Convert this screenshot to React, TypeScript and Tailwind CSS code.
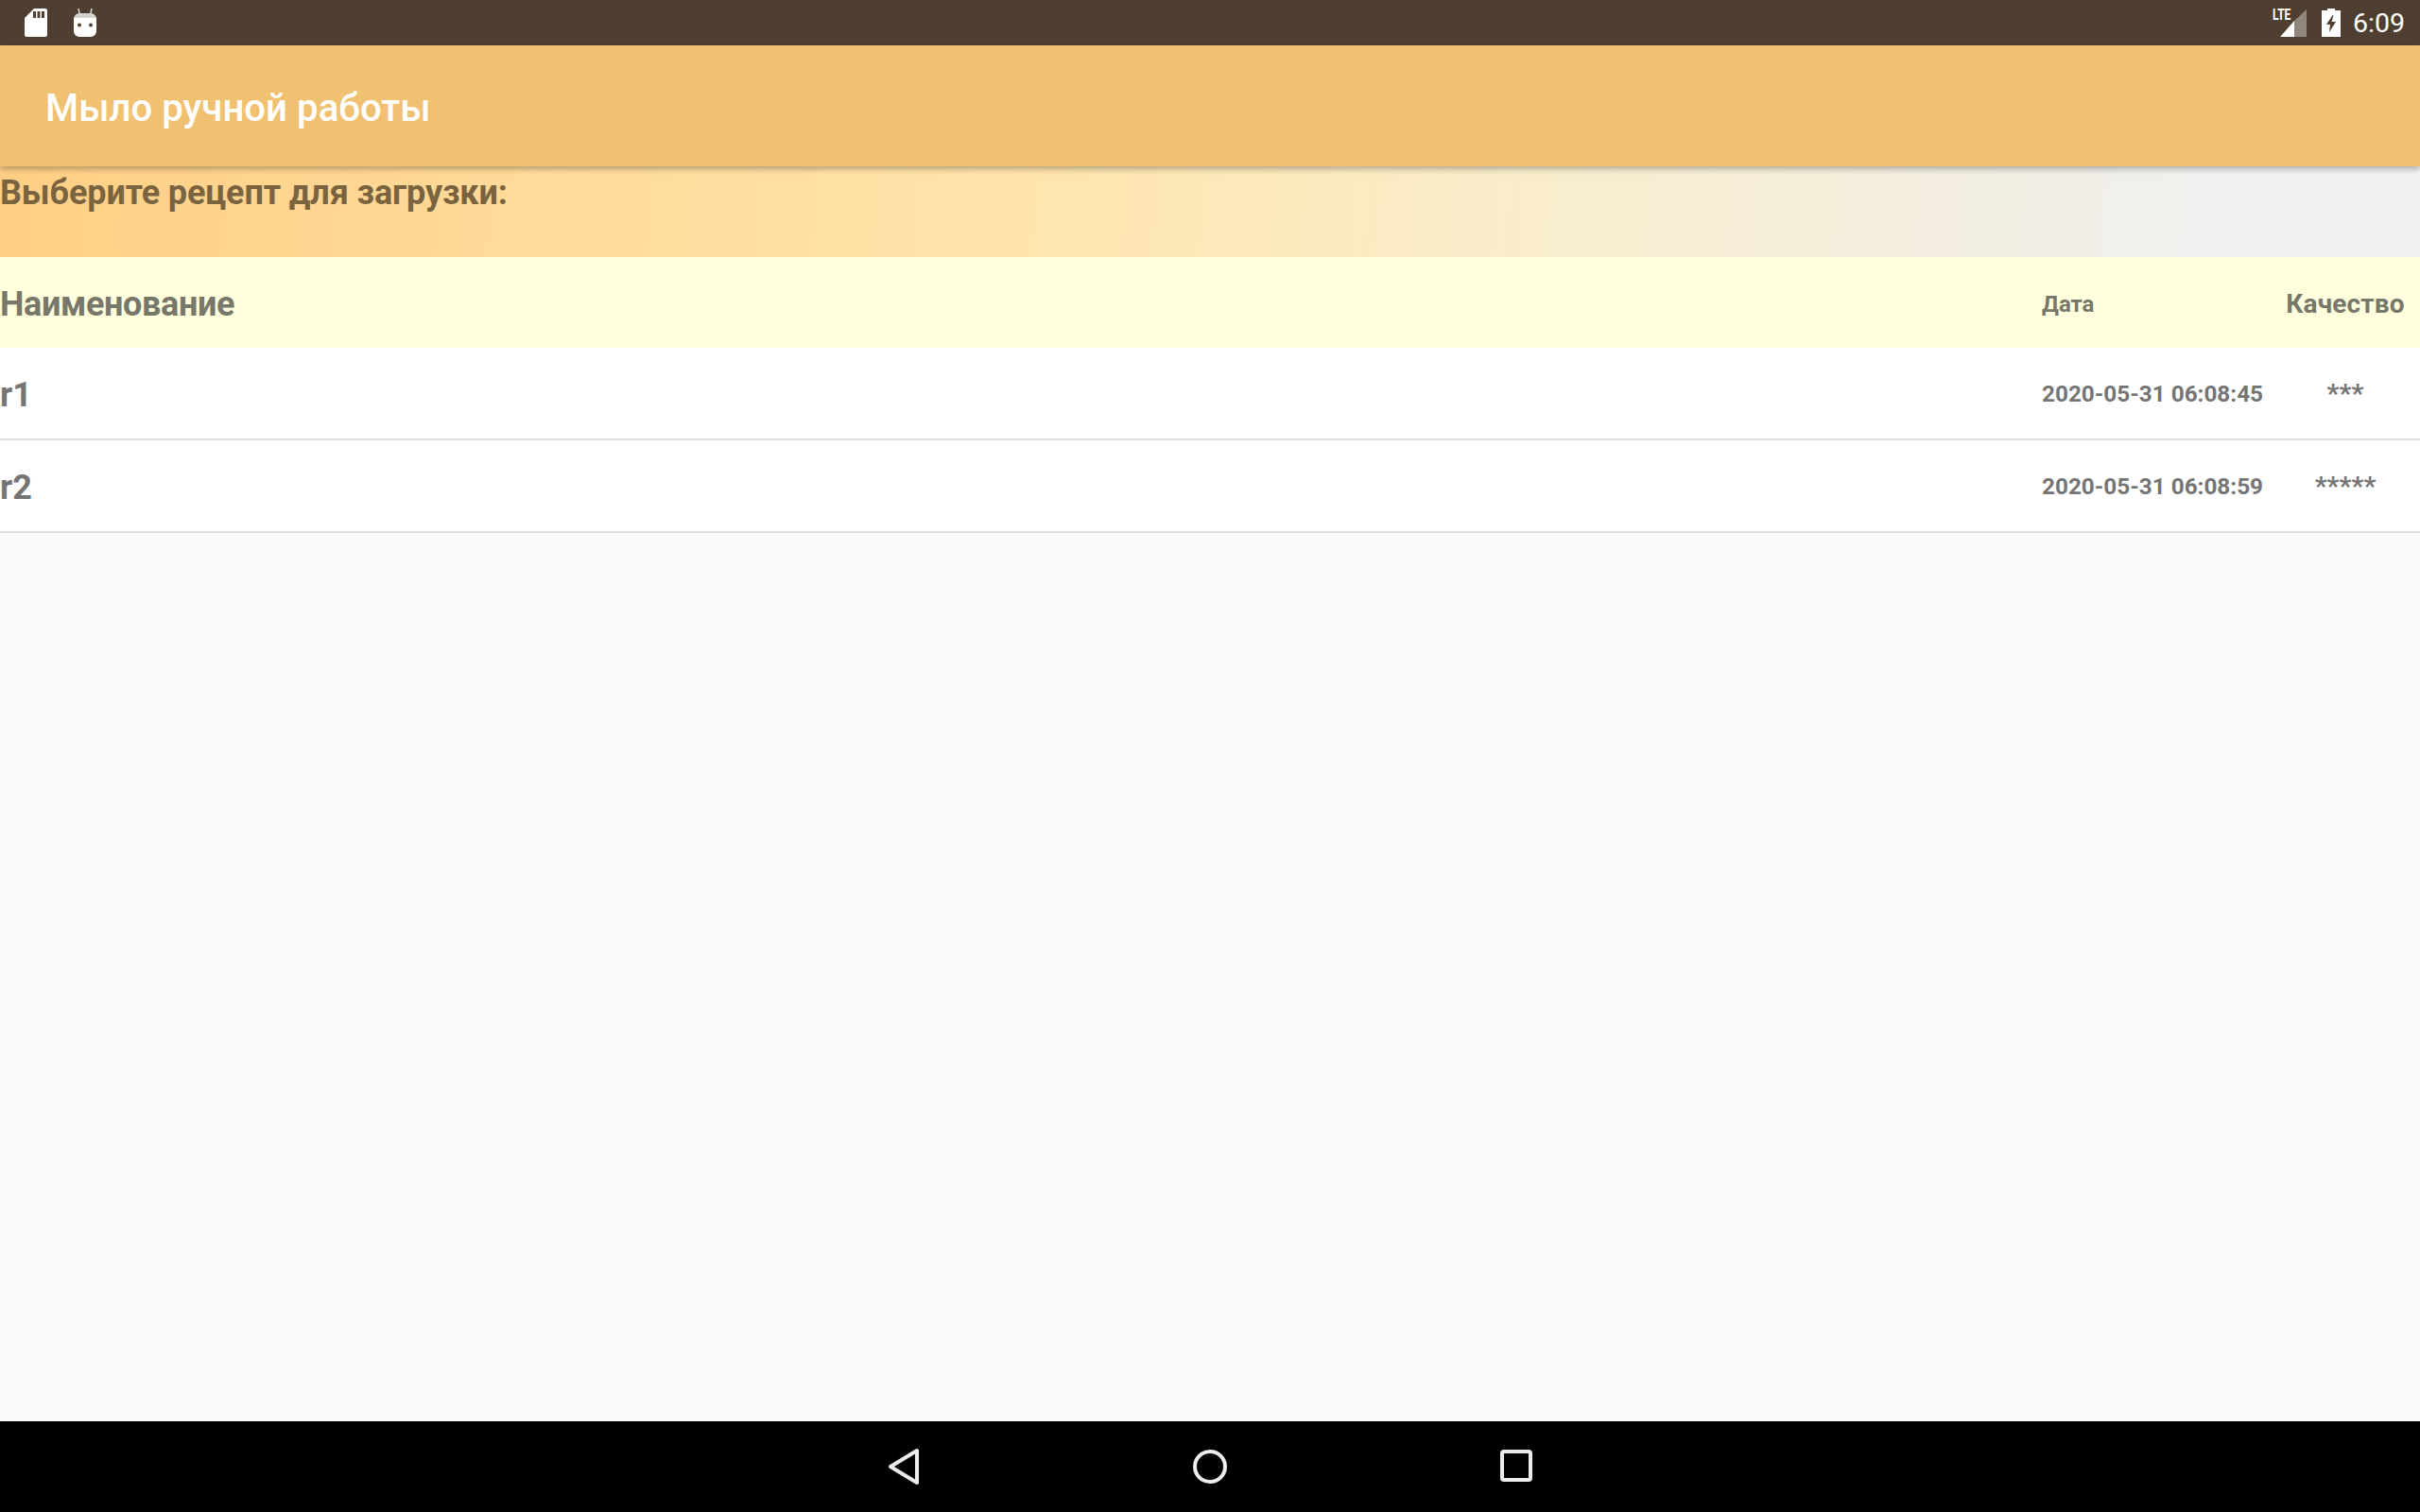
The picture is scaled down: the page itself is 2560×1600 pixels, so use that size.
const rows = [
  { name: "r1", date: "2020-05-31 06:08:45", quality: "***" },
  { name: "r2", date: "2020-05-31 06:08:59", quality: "*****" },
];

function SdCardIcon() {
  return (
    <svg width="24" height="30" viewBox="0 0 24 30" aria-hidden="true">
      <path
        fill="#fff"
        fillRule="evenodd"
        d="M10 0h12a2 2 0 0 1 2 2v26a2 2 0 0 1-2 2H2a2 2 0 0 1-2-2V10zM9 3v7h3V3zM13.500 3v7h3V3zM18 3v7h3V3z"
      />
    </svg>
  );
}

function BotIcon() {
  return (
    <svg width="24" height="32" viewBox="0 0 24 32" aria-hidden="true">
      <path d="M5 1l1.500 7M19 1l-1.500 7" stroke="#d8d6d2" strokeWidth="1.500" fill="none" />
      <path fill="#d6d3cf" d="M0 12a6 6 0 0 1 6-6h12a6 6 0 0 1 6 6v1H0z" />
      <path
        fill="#fff"
        fillRule="evenodd"
        d="M0 11h24v14a6 6 0 0 1-6 6H6a6 6 0 0 1-6-6zM6 16.500a2 2 0 1 0 0 4 2 2 0 0 0 0-4zM18 16.500a2 2 0 1 0 0 4 2 2 0 0 0 0-4z"
      />
    </svg>
  );
}

function SignalIcon() {
  return (
    <svg width="28" height="30" viewBox="0 0 28 30" aria-hidden="true">
      <path fill="#8f867c" d="M28 0v29H15V12z" />
      <path fill="#fff" d="M15 12v17H0z" />
    </svg>
  );
}

function BatteryIcon() {
  return (
    <svg width="20" height="30" viewBox="0 0 20 30" aria-hidden="true">
      <path
        fill="#fff"
        fillRule="evenodd"
        d="M6 0h8v2h6v28H0V2h6zM11.500 7L5 17h4l-1 8 7-11h-4.500l2-7z"
      />
    </svg>
  );
}

export default function App() {
  return (
    <div className="flex h-[1600px] w-[2560px] flex-col overflow-hidden bg-[#fafafa] font-['Roboto',sans-serif]">
      <div className="flex h-12 shrink-0 items-center justify-between bg-[#4f3f30] pr-4 pl-[26px] text-white">
        <div className="flex items-center gap-7">
          <SdCardIcon />
          <BotIcon />
        </div>
        <div className="flex items-center">
          <div className="relative flex h-8 w-9 items-end justify-end">
            <span className="absolute top-0 left-0 origin-top-left scale-x-75 text-[16px] leading-[16px] font-bold">LTE</span>
            <SignalIcon />
          </div>
          <div className="ml-4">
            <BatteryIcon />
          </div>
          <span className="ml-[13px] pt-[2px] text-[28.5px] leading-8">6:09</span>
        </div>
      </div>

      <header className="z-10 flex h-32 shrink-0 items-center bg-[#efc171] pt-[7px] pl-12 text-[40.2px] font-medium text-white shadow-[0_3px_6px_rgba(0,0,0,0.28)]">
        Мыло ручной работы
      </header>

      <div className="h-24 shrink-0 bg-[linear-gradient(95deg,#ffcf85_0%,#ffe4ac_42%,#f9edcb_62%,#f3eee0_80%,#f0f0f0_92%)] pt-[2px] text-[36px] leading-[52px] font-bold tracking-[-0.12px] text-[#7a6440]">
        Выберите рецепт для загрузки:
      </div>

      <div className="flex h-24 shrink-0 items-center bg-[#ffffdd] pt-[3px] font-bold text-[#78786a]">
        <div className="flex-1 text-[36px] tracking-[-0.35px]">Наименование</div>
        <div className="w-[257px] text-[24px]">Дата</div>
        <div className="w-[128px] text-center text-[28px] tracking-[0.15px]">Качество</div>
        <div className="w-[15px]" />
      </div>

      {rows.map((row) => (
        <div
          key={row.name}
          className="flex h-[98px] shrink-0 items-center border-b-2 border-[#dcdcdc] bg-white pt-[3px] font-bold text-[#757575]"
        >
          <div className="flex-1 text-[36px]">{row.name}</div>
          <div className="w-[257px] text-[24.3px]">{row.date}</div>
          <div className="w-[128px] text-center text-[28.5px]">{row.quality}</div>
          <div className="w-[15px]" />
        </div>
      ))}

      <div className="flex-1" />

      <nav className="flex h-24 shrink-0 items-center justify-center gap-[289px] bg-black">
        <svg width="34" height="40" viewBox="0 0 34 40" aria-hidden="true">
          <path d="M31 3v34L3 20z" fill="none" stroke="#ececec" strokeWidth="4" strokeLinejoin="round" />
        </svg>
        <svg width="36" height="40" viewBox="0 0 36 36" aria-hidden="true">
          <circle cx="18" cy="18" r="16" fill="none" stroke="#ececec" strokeWidth="4" />
        </svg>
        <svg width="34" height="36" viewBox="0 0 34 36" aria-hidden="true">
          <rect x="2" y="2" width="30" height="30" rx="2" fill="none" stroke="#ececec" strokeWidth="4" />
        </svg>
      </nav>
    </div>
  );
}
